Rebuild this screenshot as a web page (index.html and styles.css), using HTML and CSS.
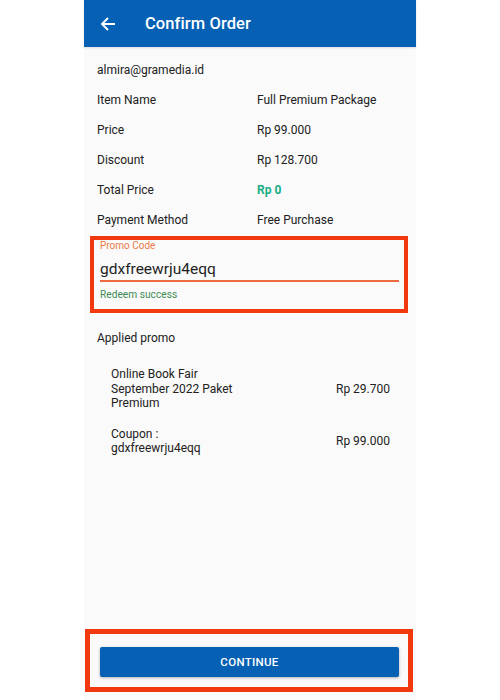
FILE: index.html
```html
<!DOCTYPE html>
<html>
<head>
<meta charset="utf-8">
<link rel="stylesheet" href="styles.css">
</head>
<body>
<div class="phone">
  <header class="appbar">
    <svg class="back" width="16" height="16" viewBox="0 0 16 16"><path d="M15 8H2.5M8 2 2 8l6 6" fill="none" stroke="#fff" stroke-width="1.9"/></svg>
    <span class="title">Confirm Order</span>
  </header>
  <main class="content">
    <div class="row"><span>almira@gramedia.id</span></div>
    <div class="row"><span>Item Name</span><span>Full Premium Package</span></div>
    <div class="row"><span>Price</span><span>Rp 99.000</span></div>
    <div class="row"><span>Discount</span><span>Rp 128.700</span></div>
    <div class="row"><span>Total Price</span><span class="free">Rp 0</span></div>
    <div class="row"><span>Payment Method</span><span>Free Purchase</span></div>
  </main>
  <section class="promo-box">
    <div class="promo-label">Promo Code</div>
    <div class="promo-input">gdxfreewrju4eqq</div>
    <div class="promo-status">Redeem success</div>
  </section>
  <section class="applied">
    <div class="applied-title">Applied promo</div>
    <div class="promo-item">
      <span class="promo-name">Online Book Fair September 2022 Paket Premium</span>
      <span class="promo-price">Rp 29.700</span>
    </div>
    <div class="promo-item">
      <span class="promo-name">Coupon : gdxfreewrju4eqq</span>
      <span class="promo-price">Rp 99.000</span>
    </div>
  </section>
  <footer class="bottom-box">
    <button class="continue">CONTINUE</button>
  </footer>
</div>
</body>
</html>
```
FILE: styles.css
```css
html, body {
  margin: 0;
  padding: 0;
  background: #ffffff;
}
body {
  font-family: Roboto, "Liberation Sans", Arial, sans-serif;
  color: #212121;
}
.phone {
  width: 332px;
  height: 700px;
  margin: 0 auto;
  background: #fafafa;
  display: flex;
  flex-direction: column;
}
.appbar {
  height: 47px;
  flex: none;
  background: #0660b3;
  display: flex;
  align-items: center;
  padding-left: 16px;
  box-shadow: 0 1px 2px rgba(0,0,0,0.12);
}
.back {
  display: block;
}
.title {
  margin-left: 29px;
  color: #ffffff;
  font-size: 16.5px;
  font-weight: 500;
  letter-spacing: 0.1px;
}
.content {
  padding: 8px 0 0 13px;
  font-size: 12px;
}
.row {
  display: grid;
  grid-template-columns: 160px 1fr;
  align-items: center;
  height: 30px;
}
.free {
  color: #19ad85;
  font-weight: 700;
}
.promo-box {
  margin: 1px 8px 0 6px;
  border: 4px solid #f2380f;
  padding: 0 5px 8px 6px;
}
.promo-label {
  font-size: 10px;
  line-height: 12px;
  color: #e97a48;
}
.promo-input {
  margin-top: 6px;
  font-size: 15.5px;
  line-height: 22px;
  color: #1f1f1f;
  border-bottom: 2px solid #ec6a3d;
}
.promo-status {
  margin-top: 7px;
  font-size: 10.2px;
  line-height: 12px;
  color: #3f8a55;
}
.applied {
  padding: 17px 0 0 13px;
  font-size: 12px;
}
.applied-title {
  line-height: 16px;
}
.promo-item {
  display: grid;
  grid-template-columns: 225px auto;
  align-items: center;
  padding-left: 14px;
  margin-top: 21px;
  line-height: 14.5px;
}
.promo-item + .promo-item {
  margin-top: 16px;
}
.promo-name {
  width: 130px;
}
.bottom-box {
  margin: auto 3px 8px 1px;
  border: 5px solid #f2380f;
  padding: 13px 9px 10px 10px;
}
.continue {
  display: block;
  width: 100%;
  height: 30px;
  border: none;
  border-radius: 2px;
  background: #0660b3;
  color: #ffffff;
  font-family: Roboto, "Liberation Sans", Arial, sans-serif;
  font-size: 11.5px;
  font-weight: 500;
  letter-spacing: 0.3px;
  box-shadow: 0 1px 3px rgba(0, 0, 0, 0.3);
}
```
